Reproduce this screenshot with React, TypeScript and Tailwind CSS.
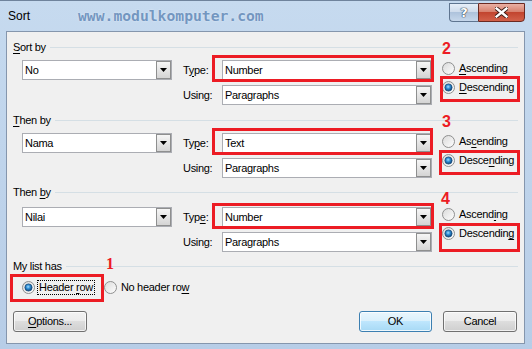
import React from 'react';

const Key = ({ children }: { children: React.ReactNode }) => (
  <span className="underline underline-offset-[2px]">{children}</span>
);

const Combo = ({ value, className }: { value: string; className: string }) => (
  <div className={`flex h-[20px] border border-[#abadb3] bg-white ${className}`}>
    <div className="flex flex-1 items-center pl-[2px] leading-none">{value}</div>
    <div className="flex w-[15px] items-center justify-center border border-[#8e8f8f] bg-gradient-to-b from-[#f6f6f6] to-[#d4d4d4]">
      <svg width="7" height="4" viewBox="0 0 7 4">
        <path d="M0 0h7L3.5 4z" fill="#000" />
      </svg>
    </div>
  </div>
);

const Radio = ({ checked }: { checked?: boolean }) => (
  <svg width="13" height="13" viewBox="0 0 13 13" className="shrink-0">
    <circle cx="6.5" cy="6.5" r="6" fill="url(#radioFill)" stroke="#8e8f8f" />
    {checked && (
      <>
        <circle cx="6.5" cy="6.5" r="3.6" fill="url(#radioDot)" />
        <circle cx="6.5" cy="6.5" r="3.6" fill="none" stroke="#1b4f80" strokeWidth="0.8" />
      </>
    )}
  </svg>
);

const RadioOption = ({ label, checked }: { label: React.ReactNode; checked?: boolean }) => (
  <div className="flex h-[19px] items-center gap-[4px]">
    <Radio checked={checked} />
    <span className="leading-none">{label}</span>
  </div>
);

const GroupHeader = ({ children }: { children: React.ReactNode }) => (
  <div className="flex h-[16px] items-center gap-[4px]">
    <span className="leading-none">{children}</span>
    <div className="h-px flex-1 bg-[#d5dfe5]" />
  </div>
);

interface SectionProps {
  title: React.ReactNode;
  value: string;
  type: string;
  typeLabel: React.ReactNode;
  asc: React.ReactNode;
  desc: React.ReactNode;
  className: string;
  rowClass: string;
  radioClass: string;
}

const SortSection = ({ title, value, type, typeLabel, asc, desc, className, rowClass, radioClass }: SectionProps) => (
  <div className={className}>
    <GroupHeader>{title}</GroupHeader>
    <div className={`flex items-start pl-[9px] ${rowClass}`}>
      <Combo value={value} className="w-[150px]" />
      <div className="ml-[11px] flex flex-col gap-[5px]">
        <div className="flex items-center">
          <span className="w-[39px] leading-none">{typeLabel}</span>
          <Combo value={type} className="w-[210px]" />
        </div>
        <div className="flex items-center">
          <span className="w-[39px] leading-none">Using:</span>
          <Combo value="Paragraphs" className="w-[210px]" />
        </div>
      </div>
      <div className={`ml-[10px] flex flex-col ${radioClass}`}>
        <RadioOption label={asc} />
        <RadioOption label={desc} checked />
      </div>
    </div>
  </div>
);

const btn =
  'flex h-[21px] items-center justify-center rounded-[3px] border leading-none shadow-[inset_0_0_0_1px_rgba(255,255,255,0.7)]';
const btnBg =
  'bg-[linear-gradient(to_bottom,#f2f2f2_0%,#ebebeb_50%,#dddddd_50%,#cfcfcf_100%)]';

export default function App() {
  return (
    <div className="relative flex h-[349px] w-[532px] flex-col overflow-hidden border-t border-[#6f839c] bg-[linear-gradient(to_bottom,#c6daef,#b7cde7)] font-['Liberation_Sans',Arial,sans-serif] text-[11px] text-black">
      <svg width="0" height="0" className="absolute">
        <defs>
          <linearGradient id="radioFill" x1="0" y1="0" x2="1" y2="1">
            <stop offset="0" stopColor="#d9d9d9" />
            <stop offset="1" stopColor="#ffffff" />
          </linearGradient>
          <radialGradient id="radioDot" cx="0.45" cy="0.4" r="0.6">
            <stop offset="0" stopColor="#a5dcfb" />
            <stop offset="0.45" stopColor="#2f8fd6" />
            <stop offset="1" stopColor="#0d3e70" />
          </radialGradient>
        </defs>
      </svg>

      {/* Title bar */}
      <div className="flex h-[30px] shrink-0 items-center">
        <span className="pl-[8px] text-[12px] leading-none">Sort</span>
        <span className="ml-[48px] font-['DejaVu_Sans_Mono',monospace] text-[14.7px] font-bold leading-none text-[#7396c0] [text-shadow:0_0_2px_rgba(235,243,252,0.9)]">
          www.modulkomputer.com
        </span>
        <div className="mr-[7px] ml-auto flex self-start pt-[2px]">
          <div className="flex h-[19px] w-[29px] items-center justify-center rounded-bl-[4px] border border-r-0 border-[#5f7590] bg-[linear-gradient(to_bottom,#e6eef8_0%,#cfdcec_45%,#aec3dc_50%,#c6d7eb_100%)]">
            <span className="font-['DejaVu_Sans',sans-serif] text-[13px] font-bold leading-none text-white [text-shadow:0_0_1px_#2b3a4d,0_0_1px_#2b3a4d,0_0_1px_#2b3a4d]">
              ?
            </span>
          </div>
          <div className="flex h-[19px] w-[47px] items-center justify-center rounded-br-[4px] border border-[#6b2a22] bg-[linear-gradient(to_bottom,#eab0a4_0%,#d8826f_45%,#c2452f_50%,#d2614a_100%)]">
            <svg width="13" height="11" viewBox="0 0 13 11">
              <path
                d="M1.5 1.5 11.5 9.5M11.5 1.5 1.5 9.5"
                stroke="#3a1a14"
                strokeWidth="4.2"
                strokeLinecap="square"
              />
              <path
                d="M1.5 1.5 11.5 9.5M11.5 1.5 1.5 9.5"
                stroke="#ffffff"
                strokeWidth="2.4"
                strokeLinecap="square"
              />
            </svg>
          </div>
        </div>
      </div>

      {/* Client area */}
      <div className="ml-[6px] flex h-[313px] w-[519px] flex-col border border-[#8596ad] bg-[#f0f0f0] px-[6px] tracking-[-0.3px]">
        <SortSection
          className="mt-[7px]"
          rowClass="mt-[5px]"
          radioClass="-mt-px"
          title={<><Key>S</Key>ort by</>}
          value="No"
          type="Number"
          typeLabel={<>T<Key>y</Key>pe:</>}
          asc={<><Key>A</Key>scending</>}
          desc={<><Key>D</Key>escending</>}
        />
        <SortSection
          className="mt-[7px]"
          rowClass="mt-[5px]"
          radioClass="-mt-px"
          title={<><Key>T</Key>hen by</>}
          value="Nama"
          type="Text"
          typeLabel={<>Ty<Key>p</Key>e:</>}
          asc={<>As<Key>c</Key>ending</>}
          desc={<>Desce<Key>n</Key>ding</>}
        />
        <SortSection
          className="mt-[6px]"
          rowClass="mt-[7px]"
          radioClass="-mt-[2px]"
          title={<>Then <Key>b</Key>y</>}
          value="Nilai"
          type="Number"
          typeLabel={<>Typ<Key>e</Key>:</>}
          asc={<>Ascend<Key>i</Key>ng</>}
          desc={<>Descendin<Key>g</Key></>}
        />

        {/* My list has */}
        <div className="mt-[6px]">
          <GroupHeader>My list has</GroupHeader>
          <div className="mt-[5px] flex h-[16px] items-center pl-[9px]">
            <Radio checked />
            <span className="ml-[2px] border border-dotted border-black px-px py-px leading-none">
              Header <Key>r</Key>ow
            </span>
            <div className="ml-[9px] flex items-center gap-[4px]">
              <Radio />
              <span className="leading-none">
                No header ro<Key>w</Key>
              </span>
            </div>
          </div>
        </div>

        {/* Buttons */}
        <div className="mt-[16px] flex items-center pr-px">
          <div className={`${btn} ${btnBg} w-[74px] border-[#707070]`}>
            <span>
              <Key>O</Key>ptions...
            </span>
          </div>
          <div className={`${btn} ml-auto w-[73px] border-[#3c7fb1] bg-[linear-gradient(to_bottom,#eaf6fd_0%,#d9f0fc_50%,#bee6fd_50%,#a7d9f5_100%)] shadow-[inset_0_0_0_1px_rgba(255,255,255,0.8)]`}>
            OK
          </div>
          <div className={`${btn} ${btnBg} ml-[11px] w-[74px] border-[#707070]`}>Cancel</div>
        </div>
      </div>

      {/* Annotations */}
      <div className="absolute left-[212px] top-[54px] h-[27px] w-[222px] border-[3px] border-[#ec1c24]" />
      <div className="absolute left-[440px] top-[75px] h-[26px] w-[80px] border-[3px] border-[#ec1c24]" />
      <span className="absolute left-[442px] top-[40px] text-[16px] font-bold leading-[16px] text-[#ec1c24]">2</span>

      <div className="absolute left-[212px] top-[127px] h-[27px] w-[221px] border-[3px] border-[#ec1c24]" />
      <div className="absolute left-[439px] top-[149px] h-[25px] w-[81px] border-[3px] border-[#ec1c24]" />
      <span className="absolute left-[442px] top-[113px] text-[16px] font-bold leading-[16px] text-[#ec1c24]">3</span>

      <div className="absolute left-[212px] top-[202px] h-[26px] w-[222px] border-[3px] border-[#ec1c24]" />
      <div className="absolute left-[439px] top-[222px] h-[29px] w-[81px] border-[3px] border-[#ec1c24]" />
      <span className="absolute left-[441px] top-[190px] text-[16px] font-bold leading-[16px] text-[#ec1c24]">4</span>

      <div className="absolute left-[10px] top-[273px] h-[28px] w-[94px] border-[3px] border-[#ec1c24]" />
      <span className="absolute left-[106px] top-[255px] font-['Liberation_Serif',serif] text-[16px] font-bold leading-[16px] text-[#ec1c24]">
        1
      </span>
    </div>
  );
}
